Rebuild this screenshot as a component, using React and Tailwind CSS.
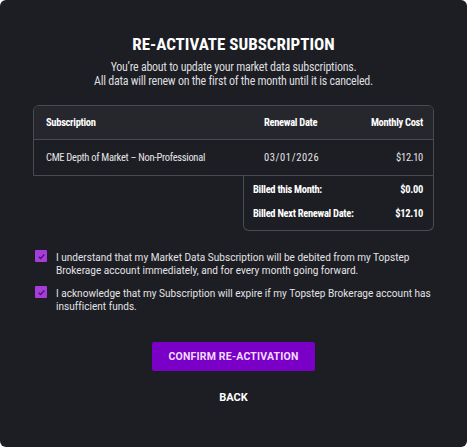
import React, { useState } from "react";

const cond = { fontFamily: "'Roboto Condensed', Roboto, sans-serif" };
const body = { fontFamily: "Roboto, 'Noto Sans', sans-serif" };

function Check({ checked, onClick }) {
  return (
    <button
      onClick={onClick}
      className={`mt-[-1px] w-3 h-3 shrink-0 rounded-[1px] flex items-center justify-center ${
        checked ? "bg-[#a63ddb]" : "border border-[#777]"
      }`}
    >
      {checked && (
        <svg viewBox="0 0 12 12" className="w-[9px] h-[9px]">
          <path d="M2.2 6.2 L4.8 8.6 L9.8 3.4" fill="none" stroke="#4b1670" strokeWidth="1.8" />
        </svg>
      )}
    </button>
  );
}

export default function App() {
  const [agree, setAgree] = useState([true, true]);

  const toggle = (i) => setAgree(agree.map((v, j) => (j === i ? !v : v)));

  return (
    <div className="w-full h-[447px] bg-white">
      <div className="h-full bg-[#1d1e23] rounded-[6px] pt-[33px] text-white">
        {/* ===== Header ===== */}
        <h1 style={cond} className="text-center text-[17px] leading-[22px] font-bold">
          RE-ACTIVATE SUBSCRIPTION
        </h1>
        <p style={cond} className="mt-[5px] text-center text-[12px] leading-[14px] tracking-[-0.25px] text-[#dcdcdf]">
          You’re about to update your market data subscriptions.
          <br />
          All data will renew on the first of the month until it is canceled.
        </p>

        {/* ===== Table ===== */}
        <div style={cond} className="mx-[33px] mt-[17px] text-[10.5px] tracking-[-0.3px]">
          <div className="border border-[#4a4b52] rounded-t-[6px] overflow-hidden">
            <div className="grid grid-cols-[218px_1fr_auto] items-center h-[34px] px-3 pr-[10px] bg-[#26272d] border-b border-[#4a4b52] font-bold">
              <span>Subscription</span>
              <span>Renewal Date</span>
              <span>Monthly Cost</span>
            </div>
            <div className="grid grid-cols-[218px_1fr_auto] items-center h-[35px] px-3 pr-[10px] text-[#e4e4e7]">
              <span>CME Depth of Market – Non-Professional</span>
              <span className="tracking-[0.6px]">03/01/2026</span>
              <span>$12.10</span>
            </div>
          </div>
          <div className="ml-auto w-[191px] border-x border-b border-[#4a4b52] rounded-b-[6px] pt-[2px] pb-[4px] pl-[9px] pr-[10px] font-bold">
            <div className="flex justify-between items-center h-6">
              <span>Billed this Month:</span>
              <span>$0.00</span>
            </div>
            <div className="flex justify-between items-center h-6">
              <span>Billed Next Renewal Date:</span>
              <span>$12.10</span>
            </div>
          </div>
        </div>

        {/* ===== Agreements ===== */}
        <div style={body} className="pl-[35px] pr-[10px] mt-[20px] flex flex-col gap-[10px] text-[10px] leading-[13px] tracking-[0.03px] text-[#e4e4e7]">
          <div className="flex gap-[9px] items-start">
            <Check checked={agree[0]} onClick={() => toggle(0)} />
            <p className="whitespace-nowrap">
              I understand that my Market Data Subscription will be debited from my Topstep
              <br />
              Brokerage account immediately, and for every month going forward.
            </p>
          </div>
          <div className="flex gap-[9px] items-start">
            <Check checked={agree[1]} onClick={() => toggle(1)} />
            <p className="whitespace-nowrap">
              I acknowledge that my Subscription will expire if my Topstep Brokerage account has
              <br />
              insufficient funds.
            </p>
          </div>
        </div>

        {/* ===== Actions ===== */}
        <div style={body} className="mt-[29px] flex flex-col items-center">
          <button className="w-[163px] h-[29px] bg-[#7a00c8] rounded-[2px] text-[10.5px] font-bold text-[#f2dcff] tracking-[0.2px]">
            CONFIRM RE-ACTIVATION
          </button>
          <button className="mt-[19px] text-[11px] font-bold text-white">BACK</button>
        </div>
      </div>
    </div>
  );
}
